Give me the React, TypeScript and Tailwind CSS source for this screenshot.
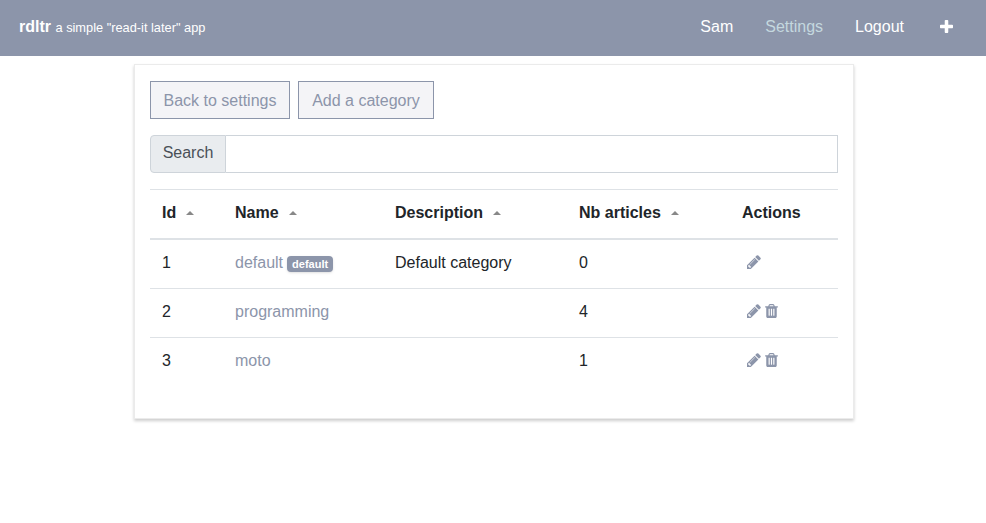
const cols = ["Id", "Name", "Description", "Nb articles"];
const rows = [
  { id: 1, name: "default", description: "Default category", count: 0, isDefault: true },
  { id: 2, name: "programming", description: "", count: 4, isDefault: false },
  { id: 3, name: "moto", description: "", count: 1, isDefault: false },
];

function Plus() {
  return (
    <svg viewBox="0 0 1408 1408" className="mr-px mb-px ml-1 h-[13px] w-[13px]" fill="currentColor">
      <path d="M1408 608v192q0 40-28 68t-68 28H896v416q0 40-28 68t-68 28H608q-40 0-68-28t-28-68V896H96q-40 0-68-28T0 800V608q0-40 28-68t68-28h416V96q0-40 28-68t68-28h192q40 0 68 28t28 68v416h416q40 0 68 28t28 68z" />
    </svg>
  );
}

function Pencil() {
  return (
    <svg viewBox="0 0 1536 1536" className="h-[14px] w-[14px]" fill="currentColor">
      <path d="M363 1408l91-91-235-235-91 91v107h128v128zM886 480q0-22-22-22-10 0-17 7l-542 542q-7 7-7 17 0 22 22 22 10 0 17-7l542-542q7-7 7-17zM832 288l416 416-832 832H0v-416zM1515 384q0 53-37 90l-166 166-416-416 166-165q36-38 90-38 53 0 91 38l235 234q37 39 37 91z" />
    </svg>
  );
}

function Trash() {
  return (
    <svg viewBox="0 0 1408 1536" className="h-[14px] w-[13px]" fill="currentColor">
      <path fillRule="evenodd" d="M512 1248V544q0-14-9-23t-23-9h-64q-14 0-23 9t-9 23v704q0 14 9 23t23 9h64q14 0 23-9t9-23zm256 0V544q0-14-9-23t-23-9h-64q-14 0-23 9t-9 23v704q0 14 9 23t23 9h64q14 0 23-9t9-23zm256 0V544q0-14-9-23t-23-9h-64q-14 0-23 9t-9 23v704q0 14 9 23t23 9h64q14 0 23-9t9-23zM480 256h448l-48-117q-7-9-17-11H546q-10 2-17 11zm928 32v64q0 14-9 23t-23 9h-96v948q0 83-47 143.500t-113 60.500H288q-66 0-113-58.500T128 1336V384H32q-14 0-23-9t-9-23v-64q0-14 9-23t23-9h309l70-167q15-37 54-63t79-26h320q40 0 79 26t54 63l70 167h309q14 0 23 9t9 23z" />
    </svg>
  );
}

export default function App() {
  return (
    <div className="min-h-[523px] bg-white font-['Liberation_Sans',Arial,sans-serif] text-base text-[#212529]">
      <nav className="flex h-14 items-center justify-between bg-[#8c95aa] pr-8 pl-[19px] text-white">
        <div className="pb-[3px]">
          <span className="font-bold">rdltr</span>{" "}
          <span className="text-[12.8px]">a simple "read-it later" app</span>
        </div>
        <div className="flex items-center gap-8 pb-[3px]">
          <span>Sam</span>
          <span className="text-[#c4d8df]">Settings</span>
          <span>Logout</span>
          <Plus />
        </div>
      </nav>
      <main className="mt-2 ml-[134px] h-[355px] w-[720px] border border-[#ebebeb] px-[15px] pt-4 shadow-[0_2px_3px_rgba(0,0,0,0.2)]">
        <div className="flex gap-2 text-[#8c95aa]">
          <button className="h-[38px] w-[140px] border border-[#8c95aa] bg-[#f4f4f7] pt-px">Back to settings</button>
          <button className="h-[38px] w-[136px] border border-[#8c95aa] bg-[#f4f4f7] pt-px">Add a category</button>
        </div>
        <div className="mt-4 flex h-[38px] w-[688px]">
          <span className="flex w-[76px] items-center justify-center rounded-l border border-[#ced4da] bg-[#e9ecef] pb-[3px] text-[#495057]">Search</span>
          <input className="min-w-0 flex-1 border border-l-0 border-[#ced4da] bg-white px-3 outline-none" />
        </div>
        <table className="mt-4 w-[688px] table-fixed border-collapse text-left">
          <colgroup>
            <col className="w-[73px]" />
            <col className="w-[160px]" />
            <col className="w-[184px]" />
            <col className="w-[163px]" />
            <col className="w-[108px]" />
          </colgroup>
          <thead>
            <tr className="h-[49px] border-t border-b-2 border-[#dee2e6]">
              {cols.map((c) => (
                <th key={c} className="px-3 pb-[2px] font-bold whitespace-nowrap">
                  {c}
                  <span className="ml-[10px] inline-block border-x-4 border-b-4 border-x-transparent border-b-[#888] align-[3px]" />
                </th>
              ))}
              <th className="px-3 pb-[2px] font-bold">Actions</th>
            </tr>
          </thead>
          <tbody>
            {rows.map((r) => {
              const pad = r.isDefault ? "px-3 pb-[1px]" : "px-3 pb-[3px]";
              return (
                <tr key={r.id} className="h-[49px] border-b border-[#dee2e6] first:h-[50px] last:border-b-0">
                  <td className={pad}>{r.id}</td>
                  <td className={`${pad} whitespace-nowrap text-[#8c95aa]`}>
                    {r.name}
                    {r.isDefault && (
                      <span className="ml-1 inline-block rounded bg-[#8c95aa] px-[5px] text-[11px] leading-4 font-bold text-white shadow-sm">default</span>
                    )}
                  </td>
                  <td className={`${pad} whitespace-nowrap`}>{r.description}</td>
                  <td className={pad}>{r.count}</td>
                  <td className="px-3 pb-[4px] text-[#8c95aa]">
                    <div className="flex items-center gap-[4px] pl-[4.5px]">
                      <Pencil />
                      {!r.isDefault && <Trash />}
                    </div>
                  </td>
                </tr>
              );
            })}
          </tbody>
        </table>
      </main>
    </div>
  );
}
